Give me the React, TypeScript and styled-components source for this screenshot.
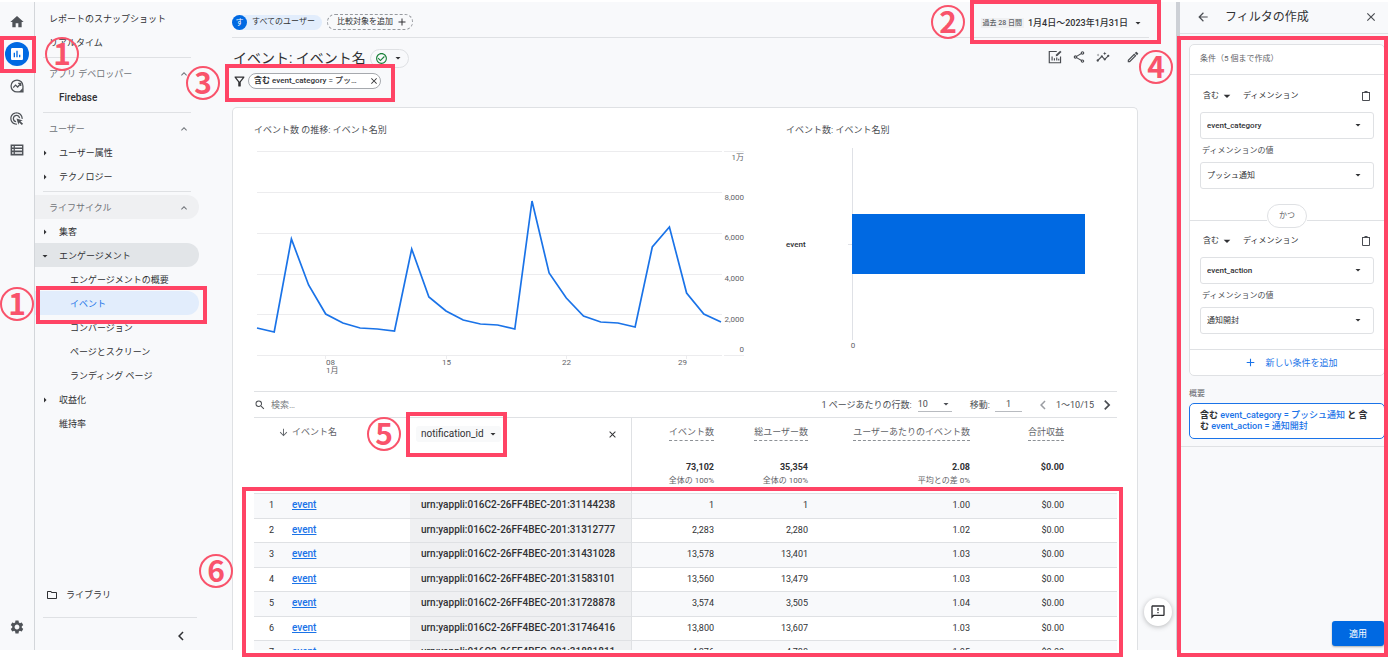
import React from "react";
import styled, { createGlobalStyle, css } from "styled-components";
import {
  MdAdd,
  MdAdsClick,
  MdArrowBack,
  MdArrowDownward,
  MdArrowDropDown,
  MdArrowRight,
  MdCheckCircleOutline,
  MdChevronLeft,
  MdChevronRight,
  MdClose,
  MdHome,
  MdInsertChart,
  MdInsights,
  MdKeyboardArrowUp,
  MdOutlineFeedback,
  MdOutlineFilterAlt,
  MdOutlineFolder,
  MdOutlineModeEdit,
  MdOutlineShare,
  MdSearch,
  MdSettings,
} from "react-icons/md";

const color = {
  surface: "#f8f9fb",
  line: "#dfe1e4",
  text: "#303134",
  muted: "#5f6368",
  blue: "#0069e2",
  link: "#1a73e8",
  mark: "#ff4465",
};

const GlobalStyle = createGlobalStyle`
  * { box-sizing: border-box; }
  body {
    margin: 0;
    background: #fff;
    color: ${color.text};
    font-family: Roboto, "Noto Sans CJK JP", sans-serif;
    font-size: 9px;
    line-height: 12px;
  }
  button, input, select { font: inherit; color: inherit; }
  button {
    display: inline-flex;
    align-items: center;
    border: 0;
    padding: 0;
    background: none;
    cursor: pointer;
  }
  svg { flex: none; display: block; }
`;

/* ---------- annotations ---------- */

type Box = { $top?: number; $right?: number; $bottom?: number; $left?: number; $width?: number; $height?: number };

const place = css<Box>`
  ${(p) => p.$top !== undefined && `top: ${p.$top}px;`}
  ${(p) => p.$right !== undefined && `right: ${p.$right}px;`}
  ${(p) => p.$bottom !== undefined && `bottom: ${p.$bottom}px;`}
  ${(p) => p.$left !== undefined && `left: ${p.$left}px;`}
  ${(p) => p.$width !== undefined && `width: ${p.$width}px;`}
  ${(p) => p.$height !== undefined && `height: ${p.$height}px;`}
`;

const Highlight = styled.div<Box>`
  position: absolute;
  z-index: 5;
  border: 4px solid ${color.mark};
  pointer-events: none;
  ${place}
`;

const Step = styled.span<Box>`
  position: absolute;
  z-index: 6;
  display: flex;
  align-items: center;
  justify-content: center;
  width: 34px;
  height: 34px;
  padding-bottom: 4px;
  border: 2px solid #f9536b;
  border-radius: 50%;
  color: #f9536b;
  font: 700 30px/30px "Noto Sans CJK JP", sans-serif;
  pointer-events: none;
  ${place}
`;

/* ---------- shell ---------- */

const Page = styled.div`
  padding: 2px 0 13px;
`;

const Shell = styled.div`
  display: grid;
  grid-template-columns: 35px 197px minmax(0, 1fr) 212px;
  grid-template-rows: minmax(0, 1fr);
  height: calc(100vh - 15px);
  background: ${color.surface};
`;

const Rail = styled.nav`
  position: relative;
  display: flex;
  flex-direction: column;
  align-items: center;
  padding: 4px 1px 7px 0;
  border-right: 1px solid #d3d6da;
  color: #4f5358;
`;

const RailButton = styled.button<{ $last?: boolean }>`
  justify-content: center;
  width: 32px;
  height: 32px;
  ${(p) => p.$last && "margin-top: auto;"}
`;

const ActiveDisc = styled.span`
  display: flex;
  align-items: center;
  justify-content: center;
  width: 24px;
  height: 24px;
  border-radius: 50%;
  background: ${color.blue};
  color: #fff;
`;

const Sidebar = styled.nav`
  position: relative;
  display: flex;
  flex-direction: column;
  padding-top: 4px;
`;

const NavLink = styled.a<{ $level?: number; $tone?: "section" | "open" | "active"; $muted?: boolean; $strong?: boolean }>`
  display: flex;
  align-items: center;
  flex: none;
  height: 24px;
  width: 164px;
  padding-top: 1px;
  padding-left: ${(p) => [14, 24, 35][p.$level ?? 0]}px;
  padding-right: 9px;
  border-radius: 0 12px 12px 0;
  color: ${(p) => (p.$tone === "active" ? color.link : p.$muted ? "#6f7378" : color.text)};
  font-size: ${(p) => (p.$strong ? 10 : 9)}px;
  font-weight: ${(p) => (p.$strong ? 500 : 400)};
  text-decoration: none;
  background: ${(p) =>
    p.$tone === "section" ? "#eff0f2" : p.$tone === "open" ? "#e2e5e8" : p.$tone === "active" ? "#e2edfc" : "none"};
`;

const Caret = styled.span`
  display: flex;
  width: 14px;
  margin-left: -20px;
  margin-right: 6px;
  justify-content: flex-start;
`;

const Chevron = styled(MdKeyboardArrowUp)`
  margin-left: auto;
`;

const NavDivider = styled.hr<{ $wide?: boolean }>`
  flex: none;
  width: ${(p) => (p.$wide ? 154 : 148)}px;
  height: 1px;
  margin: 3px 0 3px 8px;
  border: 0;
  background: ${color.line};
`;

const NavFoot = styled.div`
  margin-top: auto;
  display: flex;
  flex-direction: column;
`;

const Library = styled.a`
  display: flex;
  align-items: center;
  gap: 8px;
  height: 24px;
  margin-bottom: 7px;
  padding-left: 11px;
  color: ${color.text};
  text-decoration: none;
`;

const Collapse = styled.button`
  justify-content: center;
  width: 24px;
  height: 24px;
  margin: 3px 0 2px 134px;
`;

/* ---------- main column ---------- */

const Main = styled.main`
  position: relative;
  display: flex;
  flex-direction: column;
  min-width: 0;
`;

const TopBar = styled.header`
  position: relative;
  display: flex;
  align-items: center;
  flex: none;
  gap: 5px;
  height: 36px;
  margin-right: 27px;
  padding-top: 5px;
  border-bottom: 1px solid ${color.line};
`;

const UserChip = styled.button`
  gap: 5px;
  height: 15px;
  padding-right: 7px;
  border-radius: 8px;
  background: #e2edfc;
  font-size: 8px;
`;

const ChipDisc = styled.span`
  width: 15px;
  height: 15px;
  border-radius: 50%;
  background: ${color.blue};
  color: #fff;
  line-height: 15px;
  text-align: center;
`;

const CompareChip = styled.button`
  gap: 3px;
  height: 16px;
  padding: 0 4px 0 9px;
  border: 1px dashed #96999e;
  border-radius: 8px;
  font-size: 8px;
`;

const DateButton = styled.button`
  gap: 4px;
  height: 20px;
  margin: 0 5px 0 auto;
  padding-top: 2px;
  font-weight: 500;
`;

const DateTag = styled.span`
  padding: 0 2px;
  background: #eff0f2;
  font-size: 7px;
  line-height: 10px;
  color: ${color.muted};
`;

const TitleRow = styled.div`
  display: flex;
  align-items: center;
  flex: none;
  height: 20px;
  margin: 10px 36px 0 0;
`;

const Title = styled.h1`
  margin: 0 4px 0 1px;
  font-size: 14px;
  line-height: 20px;
  font-weight: 400;
`;

const StatusPill = styled.button`
  gap: 4px;
  height: 19px;
  padding: 0 4px;
  border: 1px solid ${color.line};
  border-radius: 10px;
  svg:first-child { color: #188038; }
`;

const Tools = styled.div`
  display: flex;
  gap: 10px;
  margin-left: auto;
  padding-bottom: 2px;
  color: #4a4d52;
  button:last-child { margin-left: 6px; }
`;

const FilterRow = styled.div`
  position: relative;
  display: flex;
  align-items: center;
  flex: none;
  gap: 1px;
  height: 16px;
  margin-top: 5px;
`;

const FilterPill = styled.div`
  display: flex;
  align-items: center;
  justify-content: space-between;
  width: 133px;
  height: 16px;
  padding: 0 1px 0 5px;
  border: 1px solid #a6a9ae;
  border-radius: 8px;
  background: #fff;
  font-size: 8px;
  font-weight: 500;
  b { font-weight: 700; }
`;

const Card = styled.section`
  position: relative;
  flex: 1;
  min-height: 0;
  overflow: hidden;
  margin: 18px 38px 0 0;
  padding: 0 20px 0 21px;
  border: 1px solid ${color.line};
  border-bottom: 0;
  border-radius: 5px 5px 0 0;
  background: #fff;
`;

const Charts = styled.div`
  display: grid;
  grid-template-columns: 532fr 331fr;
  padding-top: 14px;
`;

const Figure = styled.figure`
  margin: 0;
  figcaption { line-height: 14px; padding-top: 1px; height: 14px; color: #4a4d52; }
  svg { width: 100%; height: auto; overflow: visible; }
  text { font-size: 8px; fill: ${color.muted}; }
  .name { font-weight: 500; fill: ${color.text}; }
`;

const TableBar = styled.div`
  display: flex;
  align-items: center;
  height: 27px;
  border: solid ${color.line};
  border-width: 1px 0;
  color: #4a4d52;
`;

const SearchField = styled.label`
  display: flex;
  align-items: center;
  gap: 5px;
  input {
    width: 160px;
    padding: 0;
    border: 0;
    outline: 0;
    background: none;
  }
  input::placeholder { color: #777b80; opacity: 1; }
`;

const Pager = styled.div`
  display: flex;
  align-items: center;
  margin-left: auto;
`;

const RowsSelect = styled.span`
  position: relative;
  display: flex;
  align-items: center;
  width: 34px;
  margin: 0 18px 0 6px;
  border-bottom: 1px solid #b8bbc0;
  select {
    width: 100%;
    height: 14px;
    padding: 0;
    border: 0;
    background: none;
    appearance: none;
  }
  svg { margin-left: -12px; pointer-events: none; }
`;

const PageInput = styled.input`
  width: 27px;
  height: 14px;
  margin: 0 12px 0 5px;
  padding: 0;
  border: 0;
  border-bottom: 1px solid #b8bbc0;
  background: none;
  text-align: center;
`;

const PageRange = styled.span`
  margin: 0 3px 0 4px;
`;

const Table = styled.table`
  width: 100%;
  table-layout: fixed;
  border-collapse: separate;
  border-spacing: 0;
  th, td { padding: 0; text-align: right; font-weight: 400; }
  th:nth-child(2), td:nth-child(2) { padding-left: 13px; text-align: left; }
  th:nth-child(3), td:nth-child(3) { padding-left: 11px; text-align: left; border-right: 1px solid ${color.line}; }
  th:nth-child(7), td:nth-child(7) { padding-right: 53px; }
  td:first-child { padding-right: 5px; }
  tbody td { height: 25px; padding-bottom: 2px; border-top: 1px solid ${color.line}; }
  tbody tr:nth-child(even) td { height: 24px; }
  tbody tr:nth-child(odd) td { background: ${color.surface}; }
  tbody tr td:nth-child(3), tbody tr:nth-child(odd) td:nth-child(3) {
    background: #eff0f2;
    font-size: 10px;
    font-weight: 500;
  }
  a { color: ${color.link}; font-size: 10px; font-weight: 500; }
`;

const HeadRow = styled.tr`
  height: 37px;
  color: ${color.muted};
  th { position: relative; padding-top: 8px; vertical-align: top; }
`;

const TotalRow = styled.tr`
  height: 38px;
  td { padding-top: 6px; vertical-align: top; }
  strong { display: block; font-weight: 700; }
  small { display: block; margin-top: 2px; font-size: 8px; color: ${color.muted}; }
`;

const SortHead = styled.button`
  gap: 3px;
  margin-left: -14px;
`;

const Metric = styled.span`
  display: inline-block;
  height: 15px;
  border-bottom: 1px dashed #8d9196;
`;

const DimensionHead = styled.div`
  display: flex;
  align-items: center;
  justify-content: space-between;
  margin-left: -5px;
  padding-right: 13px;
  color: ${color.text};
`;

const DimensionSelect = styled.span`
  display: flex;
  align-items: center;
  width: 85px;
  height: 16px;
  padding-left: 5px;
  border-radius: 3px;
  background: #f8f9fa;
  font-size: 10px;
  select {
    width: 100%;
    padding: 0;
    border: 0;
    outline: 0;
    background: none;
    appearance: none;
  }
  svg { margin-left: -14px; pointer-events: none; }
`;

const FeedbackButton = styled.button`
  position: absolute;
  z-index: 4;
  right: 4px;
  bottom: 24px;
  justify-content: center;
  width: 28px;
  height: 28px;
  border-radius: 50%;
  background: #fff;
  box-shadow: 0 1px 5px rgba(60, 64, 67, 0.35);
`;

/* ---------- filter panel ---------- */

const Panel = styled.aside`
  position: relative;
  display: flex;
  flex-direction: column;
  border-left: 4px solid #cdd0d6;
`;

const PanelHead = styled.header`
  display: flex;
  align-items: center;
  height: 32px;
  padding: 0 10px 2px 16px;
  border-bottom: 1px solid ${color.line};
  color: #4a4d52;
  h2 {
    flex: 1;
    margin: 0 0 0 15px;
    color: ${color.text};
    font-size: 12px;
    line-height: 16px;
    font-weight: 400;
  }
`;

const PanelBody = styled.div`
  display: flex;
  flex-direction: column;
  padding: 10px 3px 7px 9px;
  border-bottom: 1px solid ${color.line};
`;

const Conditions = styled.fieldset`
  min-width: 0;
  margin: 0;
  padding: 0;
  border: 1px solid ${color.line};
  border-radius: 5px;
  background: #fff;
  font-size: 8px;
`;

const ConditionsHead = styled.div`
  height: 30px;
  padding: 8px 10px 0;
  border-bottom: 1px solid ${color.line};
  color: ${color.muted};
`;

const Condition = styled.div<{ $first?: boolean }>`
  display: flex;
  flex-direction: column;
  padding: ${(p) => (p.$first ? "13px 10px 15px 10px" : "0 10px 15px 10px")};
`;

const ConditionTop = styled.div`
  display: flex;
  align-items: center;
  height: 16px;
  margin-bottom: 8px;
  padding-left: 3px;
  span { flex: 1; margin-left: 8px; }
  button:last-child { margin-right: 3px; color: #4a4d52; }
`;

const Picker = styled.div<{ $strong?: boolean }>`
  display: flex;
  align-items: center;
  height: 27px;
  border: 1px solid ${color.line};
  border-radius: 3px;
  font-weight: ${(p) => (p.$strong ? 500 : 400)};
  select {
    flex: 1;
    width: 100%;
    height: 100%;
    padding: 0 0 0 6px;
    border: 0;
    background: none;
    appearance: none;
  }
  svg { margin: -2px 9px 0 -21px; pointer-events: none; }
`;

const ValueLabel = styled.label`
  margin: 6px 0 5px 2px;
  color: #4a4d52;
`;

const AndDivider = styled.div`
  display: flex;
  align-items: center;
  height: 24px;
  margin-bottom: 5px;
  &::before, &::after { content: ""; flex: 1; height: 1px; margin-top: 8px; background: ${color.line}; }
  span {
    width: 40px;
    border: 1px solid ${color.line};
    border-radius: 12px;
    line-height: 22px;
    text-align: center;
    color: ${color.muted};
  }
`;

const AddCondition = styled.button`
  justify-content: center;
  gap: 8px;
  width: 100%;
  height: 26px;
  padding-left: 8px;
  border-top: 1px solid ${color.line};
  color: ${color.link};
  font-size: 9px;
`;

const SummaryTitle = styled.h3`
  margin: 12px 0 3px;
  color: ${color.muted};
  font-size: 8px;
  line-height: 12px;
  font-weight: 400;
`;

const Summary = styled.p`
  margin: 0;
  padding: 6px 9px 6px 10px;
  border: 1px solid ${color.link};
  border-radius: 5px;
  background: #fff;
  line-height: 11px;
  font-weight: 700;
  em { color: ${color.link}; font-style: normal; font-weight: 500; }
`;

const ApplyButton = styled.button`
  justify-content: center;
  align-self: flex-end;
  width: 52px;
  height: 25px;
  margin: auto 4px 4px 0;
  border-radius: 3px;
  background: ${color.blue};
  color: #fff;
  box-shadow: 0 1px 2px rgba(60, 64, 67, 0.4);
`;

/* ---------- drawings ---------- */

const ExploreIcon = () => (
  <svg width="14" height="14" viewBox="0 0 24 24" fill="none" stroke="currentColor" strokeWidth="2.2">
    <path d="M12 1.8a10.2 10.2 0 1 0 0 20.4h10.2V12A10.2 10.2 0 0 0 12 1.8z" />
    <path d="M5.5 14.8l4-4.3 3.6 3.3 5-5.6M14 7.6h4.4V12" />
    <path d="M22 15.5v6.6h-6.8z" fill="currentColor" stroke="none" />
  </svg>
);

const ListIcon = () => (
  <svg width="14" height="14" viewBox="0 0 24 24" fill="currentColor">
    <path d="M1 2.5h22v19H1zM3.6 5v2.6h2.6V5zm4.8 0v2.6h12.2V5zM3.6 10.4v2.6h2.6v-2.6zm4.8 0v2.6h12.2v-2.6zM3.6 16v2.6h2.6V16zm4.8 0v2.6h12.2V16z" fillRule="evenodd" />
  </svg>
);

const ChartEditIcon = () => (
  <svg width="14" height="14" viewBox="0 0 24 24" fill="none" stroke="currentColor" strokeWidth="2">
    <path d="M15 2.5H2.2v19.3h19.3V11" />
    <path d="M7 18v-7M11 18v-4M15 18v-5M18.4 18v-3" />
    <path d="M13.2 10.8l.7-3 7-6.6 2.2 2.3-7 6.6z" fill="currentColor" stroke="none" />
  </svg>
);

const TrashIcon = () => (
  <svg width="10" height="12" viewBox="0 0 10 12" fill="none" stroke="currentColor">
    <path d="M1 2.5h8M3.5 1.5h3M1.5 2.5v8h7v-8" />
  </svg>
);

/* ---------- data ---------- */

const trend = [
  192, 196, 103, 149, 178, 187, 192, 193, 195, 113, 161, 175, 184, 188, 189, 193, 65, 137, 162, 180, 186, 187, 191, 111,
  91, 157, 178, 186,
];
const trendPoints = trend.map((y, i) => `${(3 + (i * 464) / 27).toFixed(1)},${y}`).join(" ");

const gridLines = [15, 56, 97, 138, 178, 219];
const yLabels: [string, number][] = [
  ["1万", 24],
  ["8,000", 64],
  ["6,000", 104],
  ["4,000", 145],
  ["2,000", 186],
  ["0", 216],
];
const xLabels: [string, number, number][] = [
  ["08", 72, 71],
  ["15", 188, 192],
  ["22", 308, 312],
  ["29", 424, 432],
];

const rows = [
  ["31144238", "1", "1", "1.00"],
  ["31312777", "2,283", "2,280", "1.02"],
  ["31431028", "13,578", "13,401", "1.03"],
  ["31583101", "13,560", "13,479", "1.03"],
  ["31728878", "3,574", "3,505", "1.04"],
  ["31746416", "13,800", "13,607", "1.03"],
  ["31881811", "4,876", "4,788", "1.05"],
];

const totals = [
  ["73,102", "全体の 100%"],
  ["35,354", "全体の 100%"],
  ["2.08", "平均との差 0%"],
  ["$0.00", ""],
];

/* ---------- parts ---------- */

function LeftRail() {
  return (
    <Rail aria-label="メイン">
      <RailButton aria-label="ホーム"><MdHome size={16} /></RailButton>
      <RailButton aria-label="レポート">
        <ActiveDisc><MdInsertChart size={16} /></ActiveDisc>
      </RailButton>
      <RailButton aria-label="探索"><ExploreIcon /></RailButton>
      <RailButton aria-label="広告"><MdAdsClick size={15} /></RailButton>
      <RailButton aria-label="設定"><ListIcon /></RailButton>
      <RailButton aria-label="管理" $last><MdSettings size={16} /></RailButton>
      <Highlight $top={34} $left={0} $width={36} $height={37} />
      <Step $top={35} $left={45}>1</Step>
      <Step $top={285} $left={0}>1</Step>
    </Rail>
  );
}

function ReportNav() {
  return (
    <Sidebar aria-label="レポート">
      <NavLink href="#snapshot">レポートのスナップショット</NavLink>
      <NavLink href="#realtime">リアルタイム</NavLink>
      <NavDivider />
      <NavLink href="#app" $muted>アプリ デベロッパー<Chevron size={12} /></NavLink>
      <NavLink href="#firebase" $level={1} $strong>Firebase</NavLink>
      <NavDivider />
      <NavLink href="#user" $muted>ユーザー<Chevron size={12} /></NavLink>
      <NavLink href="#attr" $level={1}><Caret><MdArrowRight size={12} /></Caret>ユーザー属性</NavLink>
      <NavLink href="#tech" $level={1}><Caret><MdArrowRight size={12} /></Caret>テクノロジー</NavLink>
      <NavDivider />
      <NavLink href="#life" $muted $tone="section">ライフサイクル<Chevron size={12} /></NavLink>
      <NavLink href="#acq" $level={1}><Caret><MdArrowRight size={12} /></Caret>集客</NavLink>
      <NavLink href="#eng" $level={1} $tone="open"><Caret><MdArrowDropDown size={12} /></Caret>エンゲージメント</NavLink>
      <NavLink href="#overview" $level={2}>エンゲージメントの概要</NavLink>
      <NavLink href="#events" $level={2} $tone="active">イベント</NavLink>
      <NavLink href="#conv" $level={2}>コンバージョン</NavLink>
      <NavLink href="#pages" $level={2}>ページとスクリーン</NavLink>
      <NavLink href="#landing" $level={2}>ランディング ページ</NavLink>
      <NavLink href="#money" $level={1}><Caret><MdArrowRight size={12} /></Caret>収益化</NavLink>
      <NavLink href="#retention" $level={1}>維持率</NavLink>
      <NavFoot>
        <Library href="#library"><MdOutlineFolder size={12} />ライブラリ</Library>
        <NavDivider $wide />
        <Collapse aria-label="閉じる"><MdChevronLeft size={18} /></Collapse>
      </NavFoot>
      <Highlight $top={284} $left={1} $width={171} $height={38} />
    </Sidebar>
  );
}

function TrendChart() {
  return (
    <Figure>
      <figcaption>イベント数 の推移: イベント名別</figcaption>
      <svg viewBox="0 0 532 255" role="img" aria-label="イベント数の推移">
        <g stroke="#ececee">
          {gridLines.map((y) => <path key={y} d={`M3 ${y + 0.5}H468`} />)}
          <path d="M470 15.5h20M470 219.5h20" />
          {xLabels.map(([t, , x]) => <path key={t} d={`M${x + 0.5} 220v3`} />)}
        </g>
        <polyline points={trendPoints} fill="none" stroke="#1a73e8" strokeWidth="1.7" />
        {yLabels.map(([t, y]) => <text key={t} x="490" y={y} textAnchor="end">{t}</text>)}
        {xLabels.map(([t, x]) => <text key={t} x={x} y="229">{t}</text>)}
        <text x="72" y="237">1月</text>
      </svg>
    </Figure>
  );
}

function BarChart() {
  return (
    <Figure>
      <figcaption>イベント数: イベント名別</figcaption>
      <svg viewBox="0 0 331 255" role="img" aria-label="イベント数">
        <path d="M66.5 12v192M62 108.5h4" stroke="#dfe1e6" />
        <rect x="66" y="78" width="233" height="60" fill={color.blue} />
        <text className="name" x="0" y="111">event</text>
        <text x="67" y="212" textAnchor="middle">0</text>
      </svg>
    </Figure>
  );
}

function EventTable() {
  return (
    <>
      <TableBar>
        <SearchField>
          <MdSearch size={12} />
          <input type="search" placeholder="検索…" aria-label="検索" />
        </SearchField>
        <Pager>
          <label htmlFor="rows">1 ページあたりの行数:</label>
          <RowsSelect>
            <select id="rows" defaultValue="10"><option>10</option></select>
            <MdArrowDropDown size={12} />
          </RowsSelect>
          <label htmlFor="goto">移動:</label>
          <PageInput id="goto" defaultValue="1" />
          <button aria-label="前へ"><MdChevronLeft size={18} color="#9a9da2" /></button>
          <PageRange>1〜10/15</PageRange>
          <button aria-label="次へ"><MdChevronRight size={20} /></button>
        </Pager>
      </TableBar>
      <Table>
        <colgroup>
          <col width="25" />
          <col width="131" />
          <col />
          <col width="82" />
          <col width="94" />
          <col width="162" />
          <col width="147" />
        </colgroup>
        <thead>
          <HeadRow>
            <th />
            <th><SortHead><MdArrowDownward size={11} />イベント名</SortHead></th>
            <th>
              <DimensionHead>
                <DimensionSelect>
                  <select aria-label="ディメンション" defaultValue="notification_id"><option>notification_id</option></select>
                  <MdArrowDropDown size={12} />
                </DimensionSelect>
                <button aria-label="削除"><MdClose size={11} /></button>
              </DimensionHead>
              <Highlight $top={-6} $left={-4} $width={101} $height={45} />
              <Step $top={-1} $left={-43}>5</Step>
            </th>
            <th><Metric>イベント数</Metric></th>
            <th><Metric>総ユーザー数</Metric></th>
            <th><Metric>ユーザーあたりのイベント数</Metric></th>
            <th><Metric>合計収益</Metric></th>
          </HeadRow>
          <TotalRow>
            <td />
            <td />
            <td />
            {totals.map(([value, note], i) => (
              <td key={i}><strong>{value}</strong><small>{note}</small></td>
            ))}
          </TotalRow>
        </thead>
        <tbody>
          {rows.map(([id, events, users, perUser], i) => (
            <tr key={id}>
              <td>{i + 1}</td>
              <td><a href="#event">event</a></td>
              <td>urn:yappli:016C2-26FF4BEC-201:{id}</td>
              <td>{events}</td>
              <td>{users}</td>
              <td>{perUser}</td>
              <td>$0.00</td>
            </tr>
          ))}
        </tbody>
      </Table>
    </>
  );
}

function FilterCondition({ id, dimension, value, first }: { id: string; dimension: string; value: string; first?: boolean }) {
  return (
    <Condition $first={first}>
      <ConditionTop>
        <button>含む<MdArrowDropDown size={16} /></button>
        <span>ディメンション</span>
        <button aria-label="条件を削除"><TrashIcon /></button>
      </ConditionTop>
      <Picker $strong>
        <select aria-label="ディメンション" defaultValue={dimension}><option>{dimension}</option></select>
        <MdArrowDropDown size={12} />
      </Picker>
      <ValueLabel htmlFor={id}>ディメンションの値</ValueLabel>
      <Picker>
        <select id={id} defaultValue={value}><option>{value}</option></select>
        <MdArrowDropDown size={12} />
      </Picker>
    </Condition>
  );
}

function FilterPanel() {
  return (
    <Panel>
      <PanelHead>
        <button aria-label="戻る"><MdArrowBack size={14} /></button>
        <h2>フィルタの作成</h2>
        <button aria-label="閉じる"><MdClose size={14} /></button>
      </PanelHead>
      <PanelBody>
        <Conditions>
          <ConditionsHead>条件（5 個まで作成）</ConditionsHead>
          <FilterCondition id="value-category" dimension="event_category" value="プッシュ通知" first />
          <AndDivider><span>かつ</span></AndDivider>
          <FilterCondition id="value-action" dimension="event_action" value="通知開封" />
          <AddCondition><MdAdd size={13} />新しい条件を追加</AddCondition>
        </Conditions>
        <SummaryTitle>概要</SummaryTitle>
        <Summary>
          含む <em>event_category = プッシュ通知</em> と 含む <em>event_action = 通知開封</em>
        </Summary>
      </PanelBody>
      <ApplyButton>適用</ApplyButton>
      <Highlight $top={34} $left={-3} $right={0} $bottom={-7} />
    </Panel>
  );
}

export default function App() {
  return (
    <Page>
      <GlobalStyle />
      <Shell>
        <LeftRail />
        <ReportNav />
        <Main>
          <TopBar>
            <UserChip><ChipDisc>す</ChipDisc>すべてのユーザー</UserChip>
            <CompareChip>比較対象を追加<MdAdd size={12} /></CompareChip>
            <DateButton>
              <DateTag>過去 28 日間</DateTag>1月4日〜2023年1月31日<MdArrowDropDown size={12} />
            </DateButton>
            <Highlight $top={-2} $right={-12} $width={191} $height={44} />
            <Step $top={3} $right={184}>2</Step>
          </TopBar>
          <TitleRow>
            <Title>イベント: イベント名</Title>
            <StatusPill aria-label="データの状態"><MdCheckCircleOutline size={13} /><MdArrowDropDown size={12} /></StatusPill>
            <Tools>
              <button aria-label="比較を編集"><ChartEditIcon /></button>
              <button aria-label="共有"><MdOutlineShare size={14} /></button>
              <button aria-label="インサイト"><MdInsights size={14} /></button>
              <button aria-label="レポートを編集"><MdOutlineModeEdit size={14} /></button>
            </Tools>
          </TitleRow>
          <FilterRow>
            <MdOutlineFilterAlt size={15} />
            <FilterPill>
              <span><b>含む</b> event_category = プッ…</span>
              <button aria-label="フィルタを解除"><MdClose size={10} /></button>
            </FilterPill>
            <Highlight $top={-9} $left={-7} $width={170} $height={38} />
            <Step $top={-7} $left={-46}>3</Step>
          </FilterRow>
          <Card>
            <Charts>
              <TrendChart />
              <BarChart />
            </Charts>
            <EventTable />
          </Card>
          <FeedbackButton aria-label="フィードバック"><MdOutlineFeedback size={16} /></FeedbackButton>
          <Step $top={48} $right={3}>4</Step>
          <Step $top={552} $left={-33}>6</Step>
          <Highlight $top={485} $left={10} $right={53} $bottom={-7} />
        </Main>
        <FilterPanel />
      </Shell>
    </Page>
  );
}
